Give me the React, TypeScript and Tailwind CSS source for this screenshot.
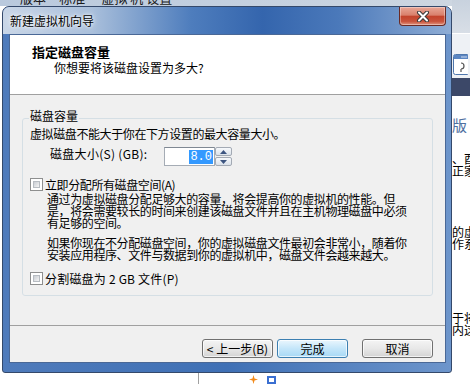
import React from "react";

const FONT = "font-['Noto_Sans_CJK_SC',sans-serif]";

const CheckBox = () => (
  <div className="h-[13px] w-[13px] shrink-0 border border-[#8e8f8f] bg-white p-[2px]">
    <div className="h-full w-full border border-[#b7bcc2] bg-linear-to-br from-[#c9cdd3] to-[#f4f4f4]" />
  </div>
);

const Btn = ({ children, primary }: { children: React.ReactNode; primary?: boolean }) => (
  <div
    className={
      primary
        ? "flex h-[19px] w-[71px] items-center justify-center rounded-[3px] border border-[#3c7fb1] bg-linear-to-b from-[#eaf6fd] via-[#c4e6fa] to-[#a7d9f5] text-[12px] leading-[14px] shadow-[inset_0_0_0_1px_rgba(255,255,255,0.7)]"
        : "flex h-[19px] w-[71px] items-center justify-center rounded-[3px] border border-[#707070] bg-linear-to-b from-[#f4f4f4] via-[#e8e8e8] to-[#d3d3d3] text-[12px] leading-[14px] shadow-[inset_0_0_0_1px_rgba(255,255,255,0.7)]"
    }
  >
    {children}
  </div>
);

const Arrow = ({ up }: { up?: boolean }) => (
  <div className="flex h-[9px] items-center justify-center rounded-[2px] border border-[#a3aab4] bg-linear-to-b from-[#f7f9fc] to-[#dbe2ea]">
    <svg width="7" height="4" viewBox="0 0 7 4">
      <path d={up ? "M0 4 L3.5 0 L7 4Z" : "M0 0 L3.5 4 L7 0Z"} fill="#3d5580" />
    </svg>
  </div>
);

const Spinner = () => (
  <div className="flex h-[19px] w-[17px] flex-col gap-[1px]">
    <Arrow up />
    <Arrow />
  </div>
);

const SideIcon = () => (
  <svg width="15" height="21" viewBox="0 0 15 21">
    <rect x="0.5" y="0.5" width="16" height="20" rx="2" fill="#fff" stroke="#4f77ad" />
    <rect x="1" y="1" width="15" height="4" fill="#5b86c2" />
    <circle cx="9" cy="3" r="0.7" fill="#fff" />
    <circle cx="11" cy="3" r="0.7" fill="#fff" />
    <circle cx="13" cy="3" r="0.7" fill="#fff" />
    <path d="M8 9 a3 3 0 1 1 0 6 M8 15 v3" fill="none" stroke="#555" strokeWidth="1.2" />
  </svg>
);

const CloseGlyph = () => (
  <svg width="14" height="11" viewBox="0 0 14 11">
    <path d="M3 1.5 L11 9.5 M11 1.5 L3 9.5" stroke="#3a3a3a" strokeWidth="4" strokeLinecap="round" />
    <path d="M3 1.5 L11 9.5 M11 1.5 L3 9.5" stroke="#fff" strokeWidth="2" strokeLinecap="round" />
  </svg>
);

export default function App() {
  return (
    <div className={`flex h-[384px] w-[470px] overflow-hidden bg-white text-black ${FONT}`}>
      {/* left column: background strip, dialog window, bottom strip */}
      <div className="flex w-[452px] flex-col">
        <div className="flex h-[6px] overflow-hidden bg-[linear-gradient(to_right,#b9c9dd,#cdd6e1)]">
          <div className="ml-[20px] -mt-[9px] whitespace-nowrap text-[13px] leading-[14px] text-[#1a1a1a]">
            版本 &nbsp;- 标准 &nbsp;- &nbsp;虚拟 机 设置
          </div>
        </div>

        <div className="ml-[2px] flex h-[367px] w-[450px] flex-col overflow-hidden rounded-t-[7px] rounded-b-[3px] border border-[#34496b] bg-[linear-gradient(to_right,#4f7bbb,#3f70b5_50%,#6d95cb)]">
          {/* title bar */}
          <div className="flex h-[27px] shrink-0 bg-[linear-gradient(to_right,#c9d6e7_0%,#a9bfdb_20%,#4e7dbd_42%,#3465ad_58%,#4b79ba_75%,#8fadd5_100%)] pl-[7px] pr-[5px]">
            <div className="pt-[6px] text-[12px] leading-[16px] [text-shadow:0_0_6px_#fff,0_0_3px_#fff]">
              新建虚拟机向导
            </div>
            <div className="ml-auto flex h-[19px] w-[47px] items-center justify-center rounded-b-[4px] border border-t-0 border-[#6b2a24] bg-[linear-gradient(180deg,#e9a797_0%,#d9806c_45%,#c3432c_52%,#c9533c_80%,#e19580_100%)] shadow-[inset_0_0_0_1px_rgba(255,255,255,0.35)]">
              <CloseGlyph />
            </div>
          </div>

          {/* client area */}
          <div className="ml-[6px] flex h-[329px] w-[437px] shrink-0 flex-col border border-[#4a6896] bg-[#f0f0f0]">
            <div className="h-[60px] shrink-0 border-b border-[#a0a0a0] bg-white pl-[22px] pt-[9px]">
              <div className="text-[13px] font-bold leading-[16px]">指定磁盘容量</div>
              <div className="ml-[22px] text-[12px] leading-[16px]">你想要将该磁盘设置为多大?</div>
            </div>

            <fieldset className="ml-[12px] mt-[13px] w-[411px] rounded-[3px] border border-[#d5dfe5] px-[7px] pb-[10px] text-[12px] tracking-[-0.4px]">
              <legend className="-ml-[1px] px-[1px] pb-[4px] leading-[16px] tracking-normal">磁盘容量</legend>
              <div className="whitespace-nowrap leading-[12px]">虚拟磁盘不能大于你在下方设置的最大容量大小。</div>

              <div className="mt-[7px] flex items-start">
                <div className="ml-[20px] mt-[1px] w-[114px] whitespace-nowrap leading-[12px] tracking-[0.3px]">
                  磁盘大小(S) (GB):
                </div>
                <div className="flex h-[19px] w-[51px] items-center justify-end border border-[#a5acb5] border-t-[#7f8893] bg-white pr-[1px]">
                  <span className="bg-[#3399ff] px-[1px] font-['Liberation_Mono',monospace] text-[12px] leading-[14px] tracking-normal text-white">
                    8.0
                  </span>
                </div>
                <Spinner />
              </div>

              <div className="mt-[12px] flex items-center gap-[2px]">
                <CheckBox />
                <div className="whitespace-nowrap leading-[12px]">立即分配所有磁盘空间(A)</div>
              </div>
              <div className="ml-[17px] mt-[2px] leading-[12px]">
                <div className="whitespace-nowrap">通过为虚拟磁盘分配足够大的容量，将会提高你的虚拟机的性能。但</div>
                <div className="whitespace-nowrap">是，将会需要较长的时间来创建该磁盘文件并且在主机物理磁盘中必须</div>
                <div className="whitespace-nowrap">有足够的空间。</div>
              </div>
              <div className="ml-[17px] mt-[8px] leading-[12px]">
                <div className="whitespace-nowrap">如果你现在不分配磁盘空间，你的虚拟磁盘文件最初会非常小，随着你</div>
                <div className="whitespace-nowrap">安装应用程序、文件与数据到你的虚拟机中，磁盘文件会越来越大。</div>
              </div>

              <div className="mt-[11px] flex items-center gap-[2px]">
                <CheckBox />
                <div className="whitespace-nowrap leading-[12px] tracking-[0.2px]">分割磁盘为 2 GB 文件(P)</div>
              </div>
            </fieldset>

            <div className="mt-[29px] h-[1px] shrink-0 bg-[#a0a0a0]" />

            <div className="mt-[13px] flex justify-end pr-[12px]">
              <Btn>&lt; 上一步(B)</Btn>
              <div className="ml-[4px]">
                <Btn primary>完成</Btn>
              </div>
              <div className="ml-[14px]">
                <Btn>取消</Btn>
              </div>
            </div>
          </div>
        </div>

        {/* below the dialog */}
        <div className="flex h-[11px] items-start">
          <div className="ml-[198px] h-full w-[1px] bg-[#a0a0a0]" />
          <svg className="ml-[50px] mt-[2px]" width="9" height="9" viewBox="0 0 9 9">
            <path d="M4.5 0 L5.5 3.5 L9 4.5 L5.5 5.5 L4.5 9 L3.5 5.5 L0 4.5 L3.5 3.5Z" fill="#f28a1a" />
          </svg>
          <div className="ml-[9px] mt-[3px] h-[8px] w-[9px] border-2 border-[#3a6fd1]" />
        </div>
      </div>

      {/* page behind the dialog, right edge */}
      <div className="flex w-[18px] flex-col">
        <div className="h-[33px] bg-[linear-gradient(to_bottom,#c8d2de,#d8dee6)]" />
        <div className="h-[45px] border-t border-white bg-[#eef1f5] pl-[1px] pt-[20px]">
          <SideIcon />
        </div>
        <div className="h-[18px] bg-[#3c4868]" />
        <div className="flex-1 overflow-hidden bg-white text-[12px] leading-[12px]">
          <div className="mt-[21px] whitespace-nowrap text-[15px] leading-[16px] text-[#4f6f9f]">版</div>
          <div className="mt-[20px] whitespace-nowrap">、酉</div>
          <div className="whitespace-nowrap">正家</div>
          <div className="mt-[49px] whitespace-nowrap">的虚</div>
          <div className="whitespace-nowrap">作系</div>
          <div className="mt-[62px] whitespace-nowrap">于将</div>
          <div className="whitespace-nowrap">内这</div>
        </div>
      </div>
    </div>
  );
}
